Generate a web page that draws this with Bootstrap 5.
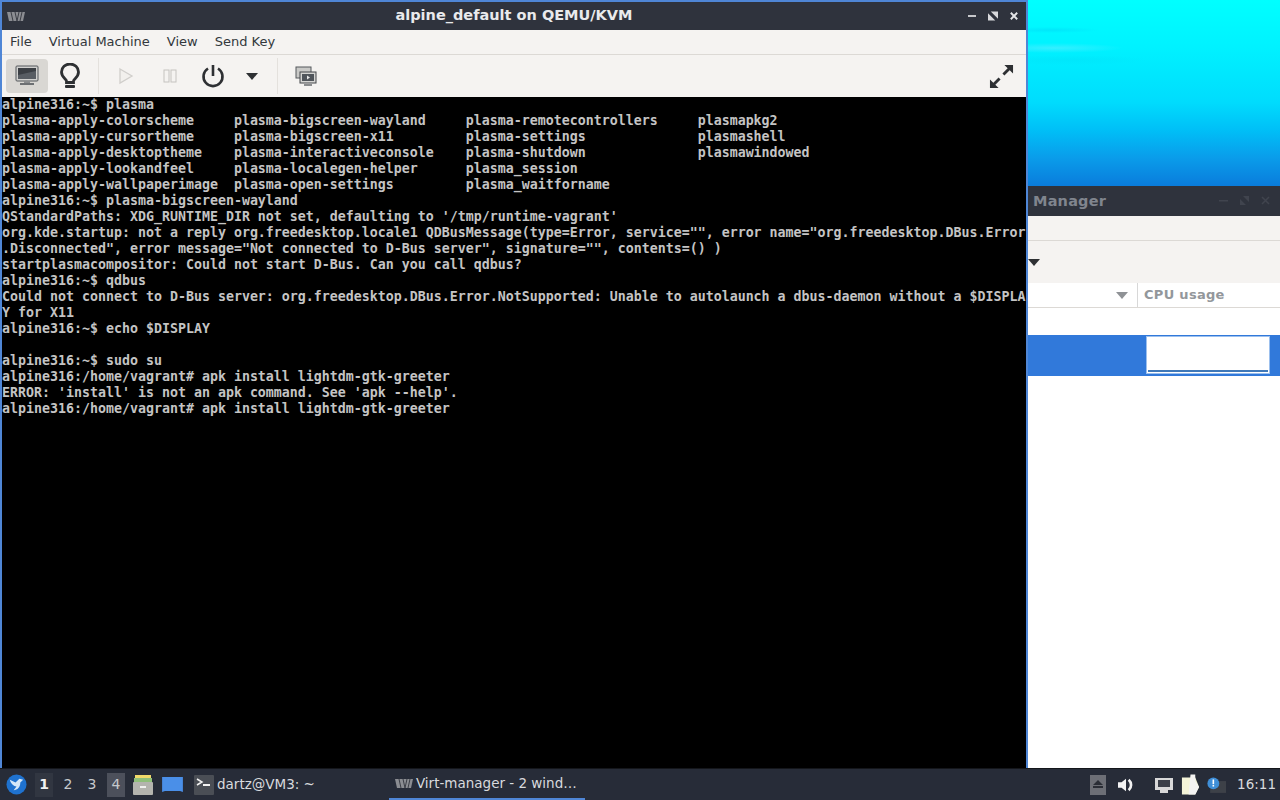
<!DOCTYPE html>
<html lang="en">
<head>
<meta charset="utf-8">
<title>alpine_default on QEMU/KVM</title>
<link href="https://cdn.jsdelivr.net/npm/bootstrap@5.3.0/dist/css/bootstrap.min.css" rel="stylesheet">
<style>
html,body{width:1280px;height:800px;overflow:hidden;margin:0;background:#000;font-family:"DejaVu Sans","Noto Sans",sans-serif}
.desk{width:1280px;height:768px}
.vm-win{width:1028px;height:768px;flex:none;background:#000;border:solid #4f86d6;border-width:2px 2px 0 2px}
.vm-title{height:28px;background:#2f333d;color:#e9eaec;font-weight:700;font-size:14.5px}
.vm-logo{left:5px;top:9px}
.vm-ctl{right:8px;top:7px;gap:12px}
.vm-menu{height:25px;background:#f5f3f1;border-bottom:1px solid #dcd9d5;color:#33383c;font-size:13px;padding-left:8px;gap:17px}
.vm-tools{height:42px;background:#f5f3f1;padding:0 12px 0 4px}
.tool-btn{height:34px;border-radius:4px}
.tb-mon{width:42px}.tb-bulb{width:44px}.tb-play{width:34px;margin-left:10px}.tb-pause{width:54px}.tb-power{width:32px}.tb-drop{width:46px}
.tool-on{background:#d9d7d3}
.tool-sep{width:1px;height:36px;background:#e4e1dd}
.sep-a{margin-left:6px}.sep-b{margin-left:2px}
.tb-switch{margin-left:17px}
.term{margin:0;padding:0;background:#000;color:#c4c4c4;font:700 13.29px/16px "DejaVu Sans Mono","Liberation Mono",monospace;width:1024px;height:671px;overflow:hidden;white-space:pre}
.side{width:252px;height:768px;flex:none}
.wall{height:186px;background:
 radial-gradient(ellipse 70px 5px at 25px 48px,rgba(120,235,255,.45),transparent),
 radial-gradient(ellipse 50px 3px at 22px 30px,rgba(0,215,245,.5),transparent),
 radial-gradient(ellipse 80px 5px at 40px 60px,rgba(0,220,245,.35),transparent),
 linear-gradient(180deg,#00ffff 0%,#00f2ff 25%,#00dcfd 55%,#00bff7 70%,#0a9cea 85%,#0a7cdc 100%)}
.mgr{flex:1;background:#fff}
.mgr-title{height:30px;background:#2f333d;color:#80858e;font-weight:700;font-size:14.5px;letter-spacing:.2px;padding:1px 0 0 5px}
.mgr-ctl{right:10px;top:10px;gap:12px}
.mgr-menu{height:25px;background:#f5f3f1;border-bottom:1px solid #dcd9d5}
.mgr-tools{height:42px;background:#f5f3f1}
.mgr-head{height:25px;border-bottom:1px solid #dcd9d5;color:#93979b;font-weight:700;font-size:13px}
.mgr-arrow{width:110px;padding-right:9px;border-right:1px solid #d8d8d8;height:24px}
.mgr-cpu{padding-left:6px;letter-spacing:.3px}
.mgr-blank{height:27px}
.mgr-sel{height:41px;background:#3179da;padding:1px 9px 0 118px}
.mgr-graph{width:124px;height:38px;background:#fff;border:1px solid #9cc0ee;padding:0 1px 1px}
.mgr-line{height:2px;width:100%;background:#3f78b8;margin-top:auto}
.tbar{height:32px;width:1280px;background:#272c38;color:#d8dade;font-size:13.5px;border-top:1px solid #14161b}
.tb-logo{margin-left:6px;margin-right:8px}
.ws{width:18px;height:24px;margin-right:6px;font-size:14px;color:#c6c9cd}
.ws-cur{background:#313641;color:#f0f1f2;font-weight:700}
.ws-act{background:#4c505b}
.tb-files{margin-left:2px}
.tb-folder{margin-left:9px}
.tb-term{margin-left:11px}
.tb-dartz{margin-left:3px}
.tsk{height:31px}
.tsk-active{width:196px;border-bottom:2px solid #4f86d6;padding-left:6px;margin-left:74px}
.tsk-name{margin-left:3px}
.tray-eject{margin-right:12px}.tray-vol{margin-right:20px}.tray-net{margin-right:7px}.tray-clip{margin-right:7px}.tray-note{margin-right:11px}
.clock{color:#d8dade;margin-right:4px}
</style>
</head>
<body>
<div class="desk d-flex">
  <div class="vm-win d-flex flex-column">
    <div class="vm-title position-relative d-flex align-items-center justify-content-center">
      <svg class="vm-logo position-absolute" width="18" height="11" viewBox="0 0 18 11"><path d="M0 1h18l-2 9H2z" fill="#8b8d92"/><path d="M4 1l2 9M8 1l2 9M12 1l-2 9M15 1l-2 9" stroke="#3a3d45" stroke-width="1"/></svg>
      <span>alpine_default on QEMU/KVM</span>
      <div class="vm-ctl position-absolute d-flex align-items-center">
        <svg width="8" height="14" viewBox="0 0 9 14"><rect y="6" width="9" height="2" fill="#d8d9dc"/></svg>
        <svg width="10" height="14" viewBox="0 0 11 14"><path d="M3 2h8v8z" fill="#d8d9dc"/><path d="M0 4l8 8H0z" fill="#d8d9dc"/></svg>
        <svg width="8" height="14" viewBox="0 0 10 14"><path d="M1 3l8 8M9 3l-8 8" stroke="#e4e5e7" stroke-width="2.400"/></svg>
      </div>
    </div>
    <div class="vm-menu d-flex align-items-center"><span>File</span><span>Virtual Machine</span><span>View</span><span>Send Key</span></div>
    <div class="vm-tools d-flex align-items-center">
      <div class="tool-btn tb-mon tool-on d-flex align-items-center justify-content-center">
        <svg width="24" height="22" viewBox="0 0 24 22"><rect x="1" y="1" width="22" height="15" rx="1" fill="#d0d0ce" stroke="#55585c"/><rect x="3" y="3" width="18" height="11" fill="#3b3f44"/><path d="M3 10l18-4v8H3z" fill="#585d63"/><rect x="9" y="16" width="6" height="2" fill="#8a8c8e"/><rect x="5" y="18" width="14" height="2" fill="#6d7073"/></svg>
      </div>
      <div class="tool-btn tb-bulb d-flex align-items-center justify-content-center">
        <svg width="20" height="26" viewBox="0 0 20 26"><path d="M6.500 19.500v-1.500c0-2-5-3.500-5-9a8.500 8 0 0 1 17 0c0 5.500-5 7-5 9v1.500z" fill="none" stroke="#2e3033" stroke-width="2.800"/><rect x="5" y="22" width="10" height="3" rx="1" fill="#2e3033"/></svg>
      </div>
      <div class="tool-sep sep-a"></div>
      <div class="tool-btn tb-play d-flex align-items-center justify-content-center">
        <svg width="16" height="18" viewBox="0 0 16 18"><path d="M2 2l12 7-12 7z" fill="#f2f0ed" stroke="#d0cecb" stroke-width="1.300"/></svg>
      </div>
      <div class="tool-btn tb-pause d-flex align-items-center justify-content-center">
        <svg width="14" height="14" viewBox="0 0 14 14"><rect x="1" y="1" width="5" height="12" fill="none" stroke="#c5c3c0"/><rect x="8" y="1" width="5" height="12" fill="none" stroke="#c5c3c0"/></svg>
      </div>
      <div class="tool-btn tb-power d-flex align-items-center justify-content-center">
        <svg width="24" height="24" viewBox="0 0 24 24"><path d="M7 4.500a9.500 9.500 0 1 0 10 0" fill="none" stroke="#2e3033" stroke-width="2.600"/><path d="M12 1v11" stroke="#2e3033" stroke-width="2.600"/></svg>
      </div>
      <div class="tool-btn tb-drop d-flex align-items-center justify-content-center">
        <svg width="12" height="7" viewBox="0 0 12 7"><path d="M0 0h12L6 7z" fill="#2e3033"/></svg>
      </div>
      <div class="tool-sep sep-b"></div>
      <svg class="tb-switch" width="22" height="21" viewBox="0 0 22 21"><rect x="1" y="1" width="15" height="11" fill="#c9c9c7" stroke="#55585c"/><rect x="5" y="6" width="16" height="11" fill="#d5d5d3" stroke="#44474b"/><rect x="7" y="8" width="12" height="7" fill="#50555b"/><path d="M12 9.500l3 2-3 2z" fill="#e8e8e8"/><rect x="9" y="18" width="8" height="2" fill="#8a8c8e"/></svg>
      <svg class="ms-auto" width="25" height="25" viewBox="0 0 26 26"><path d="M16 1h9v9zM1 25v-9l9 9z" fill="#2e3033"/><path d="M22 4L15 11M4 22l7-7" stroke="#2e3033" stroke-width="3"/></svg>
    </div>
<pre class="term">alpine316:~$ plasma
plasma-apply-colorscheme     plasma-bigscreen-wayland     plasma-remotecontrollers     plasmapkg2
plasma-apply-cursortheme     plasma-bigscreen-x11         plasma-settings              plasmashell
plasma-apply-desktoptheme    plasma-interactiveconsole    plasma-shutdown              plasmawindowed
plasma-apply-lookandfeel     plasma-localegen-helper      plasma_session
plasma-apply-wallpaperimage  plasma-open-settings         plasma_waitforname
alpine316:~$ plasma-bigscreen-wayland
QStandardPaths: XDG_RUNTIME_DIR not set, defaulting to '/tmp/runtime-vagrant'
org.kde.startup: not a reply org.freedesktop.locale1 QDBusMessage(type=Error, service="", error name="org.freedesktop.DBus.Error
.Disconnected", error message="Not connected to D-Bus server", signature="", contents=() )
startplasmacompositor: Could not start D-Bus. Can you call qdbus?
alpine316:~$ qdbus
Could not connect to D-Bus server: org.freedesktop.DBus.Error.NotSupported: Unable to autolaunch a dbus-daemon without a $DISPLA
Y for X11
alpine316:~$ echo $DISPLAY

alpine316:~$ sudo su
alpine316:/home/vagrant# apk install lightdm-gtk-greeter
ERROR: 'install' is not an apk command. See 'apk --help'.
alpine316:/home/vagrant# apk install lightdm-gtk-greeter</pre>
  </div>
  <div class="side d-flex flex-column">
    <div class="wall"></div>
    <div class="mgr d-flex flex-column">
      <div class="mgr-title position-relative d-flex align-items-center">
        <span>Manager</span>
        <div class="mgr-ctl position-absolute d-flex align-items-center">
          <svg width="9" height="9" viewBox="0 0 9 9"><rect y="4" width="9" height="1.500" fill="#40444e"/></svg>
          <svg width="9" height="9" viewBox="0 0 9 9"><path d="M3 0h6v6zM0 3l6 6H0z" fill="#40444e"/></svg>
          <svg width="9" height="9" viewBox="0 0 9 9"><path d="M1 1l7 7M8 1l-7 7" stroke="#40444e" stroke-width="1.500"/></svg>
        </div>
      </div>
      <div class="mgr-menu"></div>
      <div class="mgr-tools d-flex align-items-center">
        <svg width="12" height="7" viewBox="0 0 12 7"><path d="M0 0h12L6 7z" fill="#2e3033"/></svg>
      </div>
      <div class="mgr-head d-flex align-items-center">
        <div class="mgr-arrow d-flex align-items-center justify-content-end"><svg width="12" height="7" viewBox="0 0 12 7"><path d="M0 0h12L6 7z" fill="#8f9296"/></svg></div>
        <div class="mgr-cpu">CPU usage</div>
      </div>
      <div class="mgr-blank"></div>
      <div class="mgr-sel"><div class="mgr-graph d-flex flex-column"><div class="mgr-line"></div></div></div>
    </div>
  </div>
</div>
<div class="tbar d-flex align-items-center">
  <svg class="tb-logo" width="21" height="21" viewBox="0 0 22 22"><circle cx="11" cy="11" r="10.500" fill="#1f72cf"/><path d="M4 6l6 3 4-4 4 1-3 3c0 5-3 8-7 8l3-4c-3 0-6-3-7-7z" fill="#d5e8f8"/></svg>
  <div class="ws ws-cur d-flex align-items-center justify-content-center">1</div>
  <div class="ws d-flex align-items-center justify-content-center">2</div>
  <div class="ws d-flex align-items-center justify-content-center">3</div>
  <div class="ws ws-act d-flex align-items-center justify-content-center">4</div>
  <svg class="tb-files" width="20" height="22" viewBox="0 0 20 22"><rect x="2" y="1" width="16" height="5" fill="#f0d96a"/><rect x="1" y="4" width="18" height="4" fill="#8fbf7a"/><rect x="0" y="8" width="20" height="13" rx="1" fill="#b4b4ae"/><rect x="7" y="12" width="6" height="2" fill="#f0f0ee"/></svg>
  <svg class="tb-folder" width="21" height="17" viewBox="0 0 22 18"><path d="M0 1h22v16l-3-1H3l-3 1z" fill="#4a8fe8"/></svg>
  <svg class="tb-term" width="20" height="20" viewBox="0 0 20 20"><rect width="20" height="20" rx="1" fill="#4a4e55"/><path d="M3 4l5 3-5 3" fill="none" stroke="#f2f2f2" stroke-width="1.500"/><rect x="9" y="9" width="7" height="2" fill="#f2f2f2"/></svg>
  <span class="tb-dartz">dartz@VM3: ~</span>
  <div class="tsk tsk-active d-flex align-items-center">
    <svg width="18" height="11" viewBox="0 0 18 11"><path d="M0 1h18l-2 9H2z" fill="#8b8d92"/><path d="M4 1l2 9M8 1l2 9M12 1l-2 9M15 1l-2 9" stroke="#3a3d45" stroke-width="1"/></svg>
    <span class="tsk-name">Virt-manager - 2 wind…</span>
  </div>
  <div class="ms-auto d-flex align-items-center">
    <svg class="tray-eject" width="16" height="20" viewBox="0 0 16 20"><rect width="16" height="20" fill="#6d6f76"/><path d="M8 5l5 5H3zM3 11h10v2H3z" fill="#2b2e36"/></svg>
    <svg class="tray-vol" width="16" height="18" viewBox="0 0 18 18"><path d="M0 6h4l5-4v14l-5-4H0z" fill="#f2f2f2"/><path d="M12 3a8 8 0 0 1 0 12" fill="none" stroke="#f2f2f2" stroke-width="3"/></svg>
    <svg class="tray-net" width="20" height="18" viewBox="0 0 20 18"><path d="M1 2h18v12h-5v3H6v-3H1z" fill="#d8d8d8"/><path d="M4 4h12v7H4z" fill="#3b3f48"/></svg>
    <svg class="tray-clip" width="19" height="24" viewBox="0 0 20 24"><path d="M1 4h14l4 10-4 8H1z" fill="#f4f4d8"/><path d="M10 1h5v7l4 6-4 8H8z" fill="#f4f4f2"/></svg>
    <svg class="tray-note" width="19" height="18" viewBox="0 0 24 20"><rect x="4" y="5" width="20" height="15" fill="#3d4148"/><circle cx="8" cy="8" r="7.500" fill="#3f8fd8"/><rect x="7" y="3" width="2" height="6" fill="#fff"/><rect x="7" y="10" width="2" height="2" fill="#fff"/></svg>
    <span class="clock">16:11</span>
  </div>
</div>
</body>
</html>
